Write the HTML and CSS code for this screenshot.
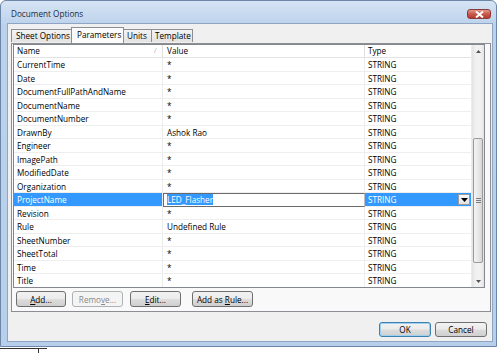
FILE: index.html
```html
<!DOCTYPE html>
<html>
<head>
<meta charset="utf-8">
<link rel="stylesheet" href="styles.css">
</head>
<body>
<div class="window">
  <div class="titlebar">
    <span class="title">Document Options</span>
    <span class="close"><svg width="11" height="7" viewBox="0 0 11 7"><path d="M2 0.5 L9 6.5 M9 0.5 L2 6.5" stroke="#fff" stroke-width="2"/></svg></span>
  </div>
  <div class="client">
    <div class="tabs">
      <div class="tab">Sheet Options</div>
      <div class="tab active">Parameters</div>
      <div class="tab">Units</div>
      <div class="tab">Template</div>
    </div>
    <div class="panel">
      <div class="grid">
        <div class="table">
          <div class="row head">
            <div class="c name">Name<span class="sort">/</span></div>
            <div class="c value">Value</div>
            <div class="c type">Type</div>
          </div>
          <div class="row"><div class="c name">CurrentTime</div><div class="c value">*</div><div class="c type">STRING</div></div>
          <div class="row"><div class="c name">Date</div><div class="c value">*</div><div class="c type">STRING</div></div>
          <div class="row"><div class="c name">DocumentFullPathAndName</div><div class="c value">*</div><div class="c type">STRING</div></div>
          <div class="row"><div class="c name">DocumentName</div><div class="c value">*</div><div class="c type">STRING</div></div>
          <div class="row"><div class="c name">DocumentNumber</div><div class="c value">*</div><div class="c type">STRING</div></div>
          <div class="row"><div class="c name">DrawnBy</div><div class="c value">Ashok Rao</div><div class="c type">STRING</div></div>
          <div class="row"><div class="c name">Engineer</div><div class="c value">*</div><div class="c type">STRING</div></div>
          <div class="row"><div class="c name">ImagePath</div><div class="c value">*</div><div class="c type">STRING</div></div>
          <div class="row"><div class="c name">ModifiedDate</div><div class="c value">*</div><div class="c type">STRING</div></div>
          <div class="row"><div class="c name">Organization</div><div class="c value">*</div><div class="c type">STRING</div></div>
          <div class="row sel"><div class="c name">ProjectName</div><div class="c value edit"><span class="hl">LED_Flasher</span></div><div class="c type">STRING<span class="dd"><svg width="7" height="4" viewBox="0 0 7 4"><path d="M0 0 H7 L3.5 4 Z" fill="#000"/></svg></span></div></div>
          <div class="row"><div class="c name">Revision</div><div class="c value">*</div><div class="c type">STRING</div></div>
          <div class="row"><div class="c name">Rule</div><div class="c value">Undefined Rule</div><div class="c type">STRING</div></div>
          <div class="row"><div class="c name">SheetNumber</div><div class="c value">*</div><div class="c type">STRING</div></div>
          <div class="row"><div class="c name">SheetTotal</div><div class="c value">*</div><div class="c type">STRING</div></div>
          <div class="row"><div class="c name">Time</div><div class="c value">*</div><div class="c type">STRING</div></div>
          <div class="row"><div class="c name">Title</div><div class="c value">*</div><div class="c type">STRING</div></div>
        </div>
        <div class="vscroll">
          <div class="arrow"><svg width="5" height="3" viewBox="0 0 5 3"><path d="M0 3 L2.5 0 L5 3 Z" fill="#555"/></svg></div>
          <div class="track">
            <div class="thumb"><span class="grip"></span></div>
          </div>
          <div class="arrow"><svg width="5" height="3" viewBox="0 0 5 3"><path d="M0 0 L2.5 3 L5 0 Z" fill="#555"/></svg></div>
        </div>
      </div>
      <div class="btnrow">
        <button class="btn b-add"><u>A</u>dd...</button>
        <button class="btn b-rem" disabled>Remo<u>v</u>e...</button>
        <button class="btn b-edit"><u>E</u>dit...</button>
        <button class="btn b-rule">Add as <u>R</u>ule...</button>
      </div>
    </div>
    <div class="footer">
      <button class="btn ok default">OK</button>
      <button class="btn cancel">Cancel</button>
    </div>
  </div>
</div>
<div class="below"><span class="bl-line"></span><span class="bl-box"></span></div>
</body>
</html>
```
FILE: styles.css
```css
* { box-sizing: border-box; }
html, body { margin: 0; padding: 0; }
body {
  width: 500px; height: 353px; overflow: hidden; background: #fff;
  font-family: "Open Sans", "Noto Sans", "DejaVu Sans", sans-serif;
  font-size: 8.2px; color: #000;
}
.window {
  width: 497px; height: 347px;
  border: 1px solid #6d87a8;
  border-radius: 6px 6px 0 0;
  background: linear-gradient(180deg, #d6e4f4 0px, #bcd2ec 24px, #b7cfea 100%);
  display: flex; flex-direction: column;
}
.titlebar {
  height: 22px; flex: none;
  display: flex; align-items: center; justify-content: space-between;
  padding: 0 5px 0 10px;
}
.title { font-size: 8.2px; color: #1c2a3a; margin-top: 3px; }
.close {
  width: 24px; height: 10px; margin-top: 4px;
  border: 1px solid #8a3a3a; border-radius: 3px;
  background: linear-gradient(180deg, #e29a8e 0%, #c9584a 50%, #b83a2c 100%);
  display: flex; align-items: center; justify-content: center;
}
.close svg { display: block; }
.client {
  flex: 1; margin: 0 3px 4px 6px;
  background: #f0f0f0;
  border: 1px solid #8ea6c4;
  display: flex; flex-direction: column;
}
.tabs { display: flex; padding: 5px 0 0 3px; height: 19px; flex: none; }
.tab {
  height: 13px; line-height: 11px; padding: 0 3px;
  border: 1px solid #8c8e94; border-right: none; border-bottom: none;
  background: linear-gradient(180deg, #f3f3f3, #e3e3e3);
  white-space: nowrap;
}
.tab:nth-child(4) { border-right: 1px solid #8c8e94; }
.tab:first-child { width: 60px; padding-left: 4px; }
.tab.active {
  margin-top: -2px; height: 16px; width: 53px; line-height: 14px;
  background: #fbfbfb; border-right: 1px solid #8c8e94; position: relative; z-index: 1;
  padding-left: 5px;
}
.tab.active + .tab { border-left: none; }
.tab:nth-child(3) { width: 27px; }
.tab:nth-child(4) { width: 42px; }
.panel {
  margin: 0 1px 0 3px; height: 269px; flex: none;
  border: 1px solid #8c8e94; background: #f9f9f9;
  padding: 0 5px 0 1px;
  display: flex; flex-direction: column;
}
.grid {
  height: 244px; flex: none;
  border: 1px solid #828790; background: #fff;
  display: flex; overflow: hidden;
}
.table { flex: 1; overflow: hidden; }
.row { display: flex; height: 13.5px; }
.row.head { height: 13px; border-bottom: 1px solid #e2e2e2; }
.c {
  height: 100%; line-height: 13px; white-space: nowrap; overflow: hidden;
  border-right: 1px solid #ececec; border-bottom: 1px solid #eeeeee;
}
.head .c { border-bottom: none; border-right: 1px solid #dedede; line-height: 12px; }
.name { width: 149px; padding-left: 3px; position: relative; }
.value { width: 202px; padding-left: 4px; }
.type { width: 106px; padding-left: 3px; border-right: none; position: relative; }
.head .type { border-right: none; }
.sort { position: absolute; left: 140px; top: 0; color: #aaa; font-size: 7px; }
.sel .name { background: #3399ff; color: #fff; }
.sel .type { background: #3399ff; color: #fff; }
.sel .edit { border: 1px solid #6b6b6b; border-right-color: #c0c0c0; line-height: 11px; padding-left: 3px; }
.hl { background: #3399ff; color: #fff; }
.dd {
  position: absolute; right: 1px; top: 1px; width: 12px; height: 11px;
  background: linear-gradient(180deg, #fafafa, #e2e2e2);
  border: 1px solid #9a9a9a;
  display: flex; align-items: center; justify-content: center;
}
.dd svg { display: block; }
.vscroll {
  width: 13px; flex: none; display: flex; flex-direction: column;
  background: linear-gradient(90deg, #e3e3e3, #f1f1f1 30%, #f1f1f1 70%, #e3e3e3);
  border-left: 1px solid #ececec;
}
.arrow { height: 13px; display: flex; align-items: center; justify-content: center; flex: none; }
.arrow svg { display: block; }
.track { flex: 1; padding-top: 80px; padding-bottom: 12px; }
.thumb {
  margin: 0 1px; height: 125px;
  border: 1px solid #9a9a9a; border-radius: 2px;
  background: linear-gradient(90deg, #f4f4f4, #e6e6e6 60%, #d6d6d6);
  display: flex; align-items: center; justify-content: center;
}
.grip {
  width: 5px; height: 6px;
  background: repeating-linear-gradient(180deg, #7c7c7c 0 1px, transparent 1px 2px);
}
.btnrow { display: flex; padding: 3px 0 0 3px; gap: 6px; }
.btn {
  font-family: inherit; font-size: 8.2px; color: #000;
  height: 16px; padding: 0; line-height: 13px;
  border: 1px solid #707070; border-radius: 3px;
  background: linear-gradient(180deg, #f2f2f2 0%, #ebebeb 48%, #dddddd 52%, #cfcfcf 100%);
}
.b-add { width: 50px; }
.b-rem { width: 51px; color: #8a8a8a; border-color: #adb2b5; background: #f4f4f4; }
.b-edit { width: 51px; margin-left: 1px; }
.b-rule { width: 61px; margin-left: 5px; }
.footer { display: flex; justify-content: flex-end; gap: 4px; padding: 10px 5px 0 0; }
.ok, .cancel { width: 52px; height: 15px; }
.default { border-color: #3c7fb1; box-shadow: inset 0 0 0 1px #9fd0f0; }
.below { position: relative; height: 6px; }
.bl-line { position: absolute; left: 0; top: 1px; width: 38px; height: 1px; background: #333; }
.bl-box { position: absolute; left: 38px; top: 1px; width: 9px; height: 5px; border-left: 1px solid #333; border-top: 1px solid #333; }
```
